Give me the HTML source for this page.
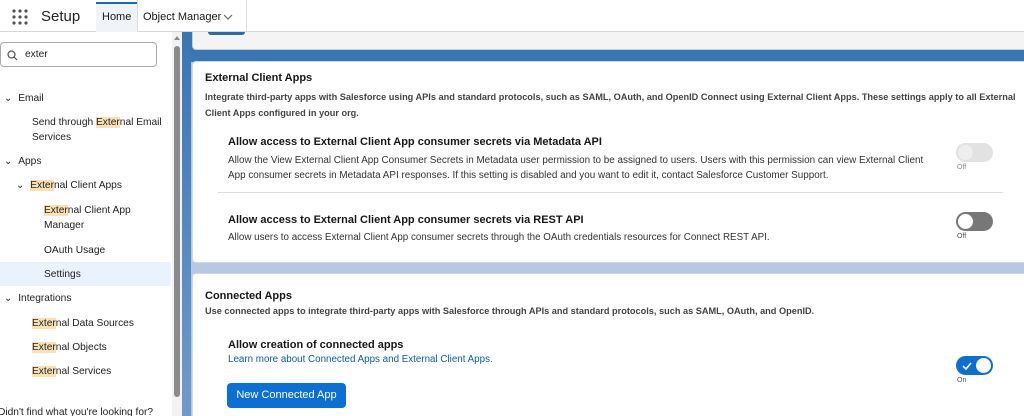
<!DOCTYPE html>
<html><head><style>
*{margin:0;padding:0;box-sizing:border-box}
html,body{width:1024px;height:416px;overflow:hidden}
body{font-family:"Liberation Sans",sans-serif;color:#181818;background:#fff;position:relative}
.abs{position:absolute;white-space:nowrap}
.top{position:absolute;left:0;top:0;width:1024px;height:32px;background:#fff;border-bottom:1px solid #d8d8d8}
.side{position:absolute;left:0;top:32px;width:182px;height:384px;background:#fff}
.main{position:absolute;left:182px;top:32px;width:842px;height:384px;background:#b7c9e2;overflow:hidden}
.card{position:absolute;background:#fff;border-radius:4px;border:1px solid #d0d8e4}
.hl{background:#fbe0b4}
.s{font-size:10.2px;color:#222}
.tog{position:absolute;width:37px;height:19px;border-radius:10px}
.knob{position:absolute;top:2px;width:15px;height:15px;border-radius:50%;background:#fff}
.lbl{position:absolute;font-size:7px;color:#555}
</style></head><body>
<div class="top">
  <div class="abs" style="left:12px;top:9px;width:14px;height:14px">
    <svg width="16" height="16" viewBox="0 0 16 16" fill="#555"><circle cx="2" cy="2" r="1.6"/><circle cx="8" cy="2" r="1.6"/><circle cx="14" cy="2" r="1.6"/><circle cx="2" cy="8" r="1.6"/><circle cx="8" cy="8" r="1.6"/><circle cx="14" cy="8" r="1.6"/><circle cx="2" cy="14" r="1.6"/><circle cx="8" cy="14" r="1.6"/><circle cx="14" cy="14" r="1.6"/></svg>
  </div>
  <div class="abs" style="left:41px;top:8px;font-size:15px;color:#222">Setup</div>
  <div class="abs" style="left:96px;top:2px;width:41px;height:30px;background:#f0f4f8;border-top:2px solid #1b6cb8"></div>
  <div class="abs" style="left:102px;top:11px;font-size:11px">Home</div>
  <div class="abs" style="left:137px;top:0;width:1px;height:32px;background:#ddd"></div>
  <div class="abs" style="left:143px;top:11px;font-size:11px">Object Manager</div>
  <svg class="abs" style="left:223px;top:14px" width="10" height="6" viewBox="0 0 10 6"><path d="M1 1 L5 5 L9 1" stroke="#666" fill="none" stroke-width="1.2"/></svg>
  <div class="abs" style="left:246px;top:0;width:1px;height:32px;background:#ddd"></div>
</div>
<div class="side">
  <div class="abs" style="left:0;top:10px;width:157px;height:25px;border:1px solid #aaa;border-radius:4px"></div>
  <svg class="abs" style="left:7px;top:18px" width="11" height="11" viewBox="0 0 11 11"><circle cx="4.5" cy="4.5" r="3.5" stroke="#555" fill="none" stroke-width="1.2"/><path d="M7 7 L10 10" stroke="#555" stroke-width="1.2"/></svg>
  <div class="abs s" style="left:25px;top:17px">exter</div>
  <div class="abs s" style="left:4px;top:61px">⌄&nbsp;&nbsp;Email</div>
  <div class="abs s" style="left:32px;top:85px">Send through <span class="hl">Exter</span>nal Email</div>
  <div class="abs s" style="left:32px;top:100px">Services</div>
  <div class="abs s" style="left:4px;top:124px">⌄&nbsp;&nbsp;Apps</div>
  <div class="abs s" style="left:16px;top:148px">⌄&nbsp;&nbsp;<span class="hl">Exter</span>nal Client Apps</div>
  <div class="abs s" style="left:44px;top:173px"><span class="hl">Exter</span>nal Client App</div>
  <div class="abs s" style="left:44px;top:188px">Manager</div>
  <div class="abs s" style="left:44px;top:213px">OAuth Usage</div>
  <div class="abs" style="left:0;top:230px;width:171px;height:24px;background:#eaf3fd"></div>
  <div class="abs s" style="left:44px;top:237px">Settings</div>
  <div class="abs s" style="left:4px;top:261px">⌄&nbsp;&nbsp;Integrations</div>
  <div class="abs s" style="left:32px;top:286px"><span class="hl">Exter</span>nal Data Sources</div>
  <div class="abs s" style="left:32px;top:310px"><span class="hl">Exter</span>nal Objects</div>
  <div class="abs s" style="left:32px;top:334px"><span class="hl">Exter</span>nal Services</div>
  <div class="abs s" style="left:-2px;top:375px">Didn't find what you're looking for?</div>
  <div class="abs" style="left:172px;top:0;width:10px;height:384px;background:#f2f2f2"></div>
  <div class="abs" style="left:174px;top:14px;width:6px;height:351px;background:#8a8a8a;border-radius:3px"></div>
  <div class="abs" style="left:174px;top:4px;width:0;height:0;border-left:3px solid transparent;border-right:3px solid transparent;border-bottom:4px solid #888"></div>
</div>
<div class="main">
  <div class="abs" style="left:0;top:0;width:842px;height:30px;background:#3a75b4"></div>
  <div class="abs" style="left:0;top:0;width:9px;height:384px;background:linear-gradient(#3a75b4,#6f9bcb)"></div>
  <div class="card" style="left:10px;top:-6px;width:850px;height:24px;background:#f4f4f4;border-color:#ccc"></div>
  <div class="abs" style="left:26px;top:0;width:37px;height:3px;background:#2d6aa9;border-radius:0 0 3px 3px"></div>
  <div class="card" style="left:10px;top:29px;width:850px;height:202px"></div>
  <div class="card" style="left:10px;top:241px;width:850px;height:160px"></div>
</div>
<div class="abs" style="left:205px;top:72px;font-size:11px;font-weight:bold">External Client Apps</div>
<div class="abs" style="left:205px;top:89px;font-size:9.2px;color:#444;font-weight:bold;line-height:16px">Integrate third-party apps with Salesforce using APIs and standard protocols, such as SAML, OAuth, and OpenID Connect using External Client Apps. These settings apply to all External<br>Client Apps configured in your org.</div>
<div class="abs" style="left:228px;top:136px;font-size:11px;font-weight:bold">Allow access to External Client App consumer secrets via Metadata API</div>
<div class="abs" style="left:228px;top:153px;font-size:9.9px;color:#333;line-height:15px">Allow the View External Client App Consumer Secrets in Metadata user permission to be assigned to users. Users with this permission can view External Client<br>App consumer secrets in Metadata API responses. If this setting is disabled and you want to edit it, contact Salesforce Customer Support.</div>
<div class="abs" style="left:218px;top:192px;width:785px;height:1px;background:#ddd"></div>
<div class="abs" style="left:228px;top:214px;font-size:11px;font-weight:bold">Allow access to External Client App consumer secrets via REST API</div>
<div class="abs" style="left:228px;top:232px;font-size:9.8px;color:#333">Allow users to access External Client App consumer secrets through the OAuth credentials resources for Connect REST API.</div>

<div class="tog" style="left:956px;top:143px;background:#e2e2e2"><div class="knob" style="left:2px;background:#eee"></div></div>
<div class="lbl" style="left:957px;top:164px;color:#888">Off</div>
<div class="tog" style="left:956px;top:212px;background:#777"><div class="knob" style="left:2px"></div></div>
<div class="lbl" style="left:957px;top:233px">Off</div>

<div class="abs" style="left:205px;top:290px;font-size:11px;font-weight:bold">Connected Apps</div>
<div class="abs" style="left:205px;top:306px;font-size:9.2px;color:#444;font-weight:bold">Use connected apps to integrate third-party apps with Salesforce through APIs and standard protocols, such as SAML, OAuth, and OpenID.</div>
<div class="abs" style="left:228px;top:339px;font-size:11px;font-weight:bold">Allow creation of connected apps</div>
<div class="abs" style="left:228px;top:354px;font-size:9.8px;color:#0b5cab">Learn more about Connected Apps and External Client Apps.</div>
<div class="abs" style="left:227px;top:383px;width:119px;height:25px;background:#0b6fd3;border-radius:4px;color:#fff;font-size:11px;text-align:center;line-height:25px">New Connected App</div>
<div class="tog" style="left:956px;top:356px;background:#0b6fd3"><div class="knob" style="left:20px"></div>
<svg style="position:absolute;left:6px;top:6px" width="10" height="8" viewBox="0 0 10 8"><path d="M1 4 L4 7 L9 1" stroke="#fff" stroke-width="1.6" fill="none"/></svg></div>
<div class="lbl" style="left:957px;top:377px">On</div>
</body></html>
